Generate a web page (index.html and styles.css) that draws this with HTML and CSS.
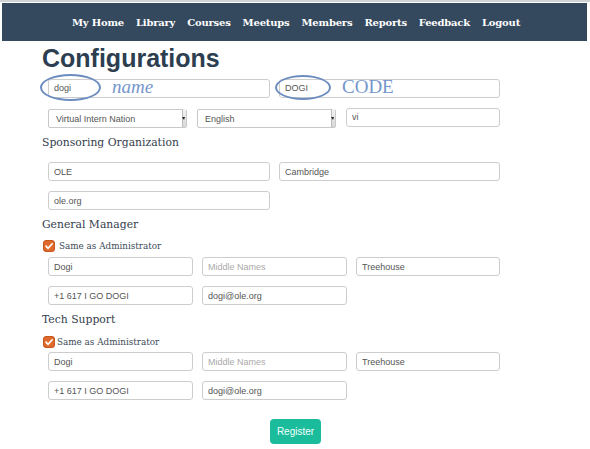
FILE: index.html
```html
<!DOCTYPE html>
<html lang="en">
<head>
<meta charset="utf-8">
<title>Configurations</title>
<link rel="stylesheet" href="styles.css">
</head>
<body>
<header class="topbar">
  <nav class="nav">
    <a href="#">My Home</a>
    <a href="#">Library</a>
    <a href="#">Courses</a>
    <a href="#">Meetups</a>
    <a href="#">Members</a>
    <a href="#">Reports</a>
    <a href="#">Feedback</a>
    <a href="#">Logout</a>
  </nav>
</header>
<main class="page">
  <h1 class="title">Configurations</h1>

  <div class="fields two first-row">
    <div class="annot">
      <input class="field" type="text" value="dogi">
      <span class="ring ring-name"></span>
      <span class="note note-name">name</span>
    </div>
    <div class="annot">
      <input class="field" type="text" value="DOGI">
      <span class="ring ring-code"></span>
      <span class="note note-code">CODE</span>
    </div>
  </div>

  <div class="fields selects">
    <div class="select-wrap"><select class="field select"><option>Virtual Intern Nation</option></select></div>
    <div class="select-wrap"><select class="field select"><option>English</option></select></div>
    <input class="field" type="text" value="vi">
  </div>

  <h2 class="section">Sponsoring Organization</h2>
  <div class="fields two after-title">
    <input class="field" type="text" value="OLE">
    <input class="field" type="text" value="Cambridge">
  </div>
  <div class="fields two">
    <input class="field" type="text" value="ole.org">
  </div>

  <h2 class="section">General Manager</h2>
  <label class="check"><span class="box"><svg viewBox="0 0 12 12" width="12" height="12"><rect x="0.5" y="0.5" width="11" height="11" rx="2.5" fill="#e0692c" stroke="#c4561c"/><path d="M3 6.2 L5.1 8.3 L9.2 3.8" fill="none" stroke="#fff" stroke-width="1.7" stroke-linecap="round" stroke-linejoin="round"/></svg></span>Same as Administrator</label>
  <div class="fields three after-check">
    <input class="field" type="text" value="Dogi">
    <input class="field" type="text" placeholder="Middle Names">
    <input class="field" type="text" value="Treehouse">
  </div>
  <div class="fields three">
    <input class="field" type="text" value="+1 617 I GO DOGI">
    <input class="field" type="text" value="dogi@ole.org">
  </div>

  <h2 class="section">Tech Support</h2>
  <label class="check check-tight"><span class="box"><svg viewBox="0 0 12 12" width="12" height="12"><rect x="0.5" y="0.5" width="11" height="11" rx="2.5" fill="#e0692c" stroke="#c4561c"/><path d="M3 6.2 L5.1 8.3 L9.2 3.8" fill="none" stroke="#fff" stroke-width="1.7" stroke-linecap="round" stroke-linejoin="round"/></svg></span>Same as Administrator</label>
  <div class="fields three after-check2">
    <input class="field" type="text" value="Dogi">
    <input class="field" type="text" placeholder="Middle Names">
    <input class="field" type="text" value="Treehouse">
  </div>
  <div class="fields three">
    <input class="field" type="text" value="+1 617 I GO DOGI">
    <input class="field" type="text" value="dogi@ole.org">
  </div>

  <div class="actions">
    <button class="btn" type="button">Register</button>
  </div>
</main>
</body>
</html>
```
FILE: styles.css
```css
html, body {
  margin: 0;
  padding: 0;
  background: #fff;
}
body {
  border-top: 2px solid #cfd3d6;
  font-family: "Liberation Sans", Arial, sans-serif;
}
.topbar {
  margin: 1px 3px 0 2px;
  height: 38px;
  background: #34495e;
  display: flex;
  align-items: center;
  justify-content: center;
}
.nav {
  display: flex;
  gap: 12px;
  padding-left: 3px;
}
.nav a {
  color: #fff;
  text-decoration: none;
  font-family: "DejaVu Serif", "Liberation Serif", serif;
  font-weight: bold;
  font-size: 10px;
  letter-spacing: -0.2px;
}
.page {
  padding-left: 42px;
  width: 458px;
}
.title {
  margin: 2px 0 0 0;
  font-family: "Liberation Sans", Arial, sans-serif;
  font-size: 25px;
  line-height: 30px;
  font-weight: bold;
  color: #2c3e50;
}
.fields {
  display: grid;
  column-gap: 9px;
  margin-left: 6px;
  margin-top: 10px;
}
.fields.first-row { margin-top: 4px; }
.two { grid-template-columns: 222px 221px; }
.three { grid-template-columns: 145px 145px 144px; }
.selects {
  grid-template-columns: 139px 139px 154px;
  column-gap: 10px;
}
.field {
  box-sizing: border-box;
  width: 100%;
  height: 19px;
  margin: 0;
  border: 1px solid #cdcdcd;
  border-radius: 3px;
  background: #fff;
  padding: 0 5px;
  font-family: "Liberation Sans", Arial, sans-serif;
  font-size: 9px;
  color: #555;
  outline: none;
}
.field::placeholder { color: #aaa; }
.select-wrap {
  position: relative;
}
.select {
  appearance: none;
  -webkit-appearance: none;
  border-radius: 2px;
  border-color: #c9c9c9;
  padding: 0 7px;
}
.select-wrap::after {
  content: "";
  position: absolute;
  right: 1px;
  top: 1px;
  bottom: 1px;
  width: 3px;
  background: linear-gradient(#f2f2f2, #d8d8d8);
  border-left: 1px solid #bbb;
}
.select-wrap::before {
  content: "";
  position: absolute;
  right: 2px;
  top: 9px;
  border-left: 2px solid transparent;
  border-right: 1px solid transparent;
  border-top: 3px solid #222;
  z-index: 1;
}
.annot {
  position: relative;
}
.ring {
  position: absolute;
  border: 2.5px solid #6d8dc0;
  border-radius: 50%;
  box-sizing: border-box;
  pointer-events: none;
}
.ring-name {
  left: -8px;
  top: -3px;
  width: 61px;
  height: 27px;
}
.ring-code {
  left: -4px;
  top: -2px;
  width: 56px;
  height: 25px;
}
.note {
  position: absolute;
  font-family: "Liberation Serif", "Times New Roman", serif;
  color: #7596cc;
  font-size: 19px;
  line-height: 19px;
}
.note-name {
  left: 64px;
  top: 0px;
  font-style: italic;
}
.note-code {
  left: 63px;
  top: 0px;
}
.section {
  margin: 7px 0 0 0;
  font-family: "DejaVu Serif", "Liberation Serif", serif;
  font-weight: normal;
  font-size: 10.8px;
  line-height: 16px;
  color: #34404d;
}
.fields.after-title { margin-top: 11px; }
.check {
  display: flex;
  align-items: center;
  gap: 4px;
  margin: 6px 0 0 1px;
  height: 14px;
  font-family: "DejaVu Serif", "Liberation Serif", serif;
  font-size: 8.8px;
  color: #3c4a58;
}
.check-tight { margin-top: 7px; gap: 2px; }
.box {
  display: flex;
  width: 12px;
  height: 12px;
}
.fields.after-check { margin-top: 4px; }
.fields.after-check2 { margin-top: 3px; }
.actions {
  display: flex;
  margin-top: 19px;
  padding-left: 228px;
}
.btn {
  width: 51px;
  height: 25px;
  border: 0;
  border-radius: 4px;
  background: #1abc9c;
  color: #f2fffb;
  font-family: "Liberation Sans", Arial, sans-serif;
  font-size: 10px;
  padding: 0;
}
```
